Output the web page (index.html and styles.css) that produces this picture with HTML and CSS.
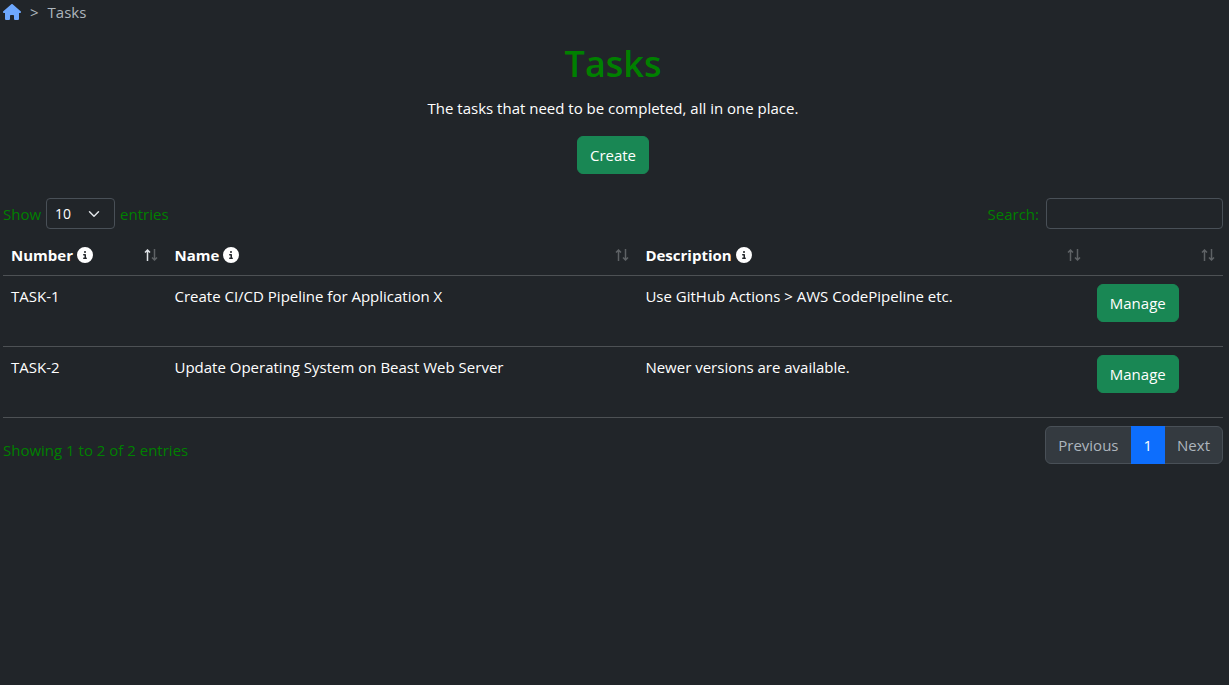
FILE: index.html
```html
<!DOCTYPE html>
<html lang="en">
<head>
    <meta charset="UTF-8">
    <meta name="viewport" content="width=device-width, initial-scale=1.0">
    <title>Tasks</title>
    <link rel="stylesheet" href="styles.css">
</head>
<body>
    <svg class="sprite" aria-hidden="true">
        <symbol id="info" viewBox="0 0 512 512">
            <path d="M256 512A256 256 0 1 0 256 0a256 256 0 1 0 0 512zM216 336h24V272H216c-13.3 0-24-10.7-24-24s10.7-24 24-24h48c13.3 0 24 10.7 24 24v88h8c13.3 0 24 10.7 24 24s-10.7 24-24 24H216c-13.3 0-24-10.7-24-24s10.7-24 24-24zm40-208a32 32 0 1 1 0 64 32 32 0 1 1 0-64z"/>
        </symbol>
    </svg>

    <nav class="breadcrumb" aria-label="breadcrumb">
        <a href="#" aria-label="Home">
            <svg class="home" viewBox="0 0 576 512"><path d="M575.8 255.5c0 18-15 32.1-32 32.1h-32l.7 160.2c0 2.7-.2 5.4-.5 8.1V472c0 22.1-17.9 40-40 40H456c-1.1 0-2.2 0-3.3-.1c-1.4.1-2.8.1-4.2.1H416 392c-22.1 0-40-17.9-40-40V448 384c0-17.7-14.3-32-32-32H256c-17.7 0-32 14.3-32 32v64 24c0 22.1-17.9 40-40 40H160 128.1c-1.5 0-3-.1-4.5-.2c-1.2.1-2.4.2-3.6.2H104c-22.1 0-40-17.9-40-40V360c0-.9 0-1.9.1-2.8V287.6H32c-18 0-32-14-32-32.1c0-9 3-17 10-24L266.4 8c7-7 15-8 22-8s15 2 21 7L564.8 231.5c8 7 12 15 11 24z"/></svg>
        </a>
        <span>&gt;</span>
        <span>Tasks</span>
    </nav>

    <header class="intro">
        <h1>Tasks</h1>
        <p>The tasks that need to be completed, all in one place.</p>
        <button type="button" class="btn">Create</button>
    </header>

    <main>
        <div class="controls">
            <label>Show
                <select>
                    <option>10</option>
                    <option>25</option>
                    <option>50</option>
                    <option>100</option>
                </select>
                entries
            </label>
            <label class="search">Search: <input type="search"></label>
        </div>

        <table>
            <colgroup>
                <col class="col-number">
                <col class="col-name">
                <col class="col-description">
                <col class="col-action">
            </colgroup>
            <thead>
                <tr>
                    <th>
                        <div class="heading">
                            Number <svg class="info"><use href="#info"/></svg>
                            <svg class="sort asc" viewBox="0 0 14 12"><path d="M3.500 12V1M1 3.500 3.500 1 6 3.500"/><path d="M10.500 0v11M8 8.500l2.500 2.500L13 8.500"/></svg>
                        </div>
                    </th>
                    <th>
                        <div class="heading">
                            Name <svg class="info"><use href="#info"/></svg>
                            <svg class="sort" viewBox="0 0 14 12"><path d="M3.500 12V1M1 3.500 3.500 1 6 3.500"/><path d="M10.500 0v11M8 8.500l2.500 2.500L13 8.500"/></svg>
                        </div>
                    </th>
                    <th>
                        <div class="heading">
                            Description <svg class="info"><use href="#info"/></svg>
                            <svg class="sort" viewBox="0 0 14 12"><path d="M3.500 12V1M1 3.500 3.500 1 6 3.500"/><path d="M10.500 0v11M8 8.500l2.500 2.500L13 8.500"/></svg>
                        </div>
                    </th>
                    <th>
                        <div class="heading">
                            <svg class="sort" viewBox="0 0 14 12"><path d="M3.500 12V1M1 3.500 3.500 1 6 3.500"/><path d="M10.500 0v11M8 8.500l2.500 2.500L13 8.500"/></svg>
                        </div>
                    </th>
                </tr>
            </thead>
            <tbody>
                <tr>
                    <td>TASK-1</td>
                    <td>Create CI/CD Pipeline for Application X</td>
                    <td>Use GitHub Actions &gt; AWS CodePipeline etc.</td>
                    <td><button type="button" class="btn manage">Manage</button></td>
                </tr>
                <tr>
                    <td>TASK-2</td>
                    <td>Update Operating System on Beast Web Server</td>
                    <td>Newer versions are available.</td>
                    <td><button type="button" class="btn manage">Manage</button></td>
                </tr>
            </tbody>
        </table>

        <div class="footer">
            <div class="entries">Showing 1 to 2 of 2 entries</div>
            <nav class="pagination" aria-label="Pages">
                <a href="#">Previous</a>
                <a href="#" class="active">1</a>
                <a href="#">Next</a>
            </nav>
        </div>
    </main>
</body>
</html>
```
FILE: styles.css
```css
* { box-sizing: border-box; }
body {
    margin: 0;
    padding: 0 6px 0 3px;
    background: #212529;
    color: #fff;
    font: 15px/24px "Segoe UI", "Open Sans", "Noto Sans", sans-serif;
}
button, input, select { font: inherit; }
.sprite { display: none; }

.breadcrumb { display: flex; align-items: center; gap: 9px; height: 24px; margin-bottom: 16px; color: #adb5bd; }
.breadcrumb a { display: flex; }
.home { width: 18px; height: 16px; fill: #6ea8fe; }

.intro { text-align: center; margin-bottom: 24px; }
h1 { margin: 0 0 8px; color: green; font-size: 36px; font-weight: 600; line-height: 48px; }
.intro p { margin: 0 0 16px; }
.btn { display: inline-block; vertical-align: top; padding: 6px 12px; border: 1px solid #198754; border-radius: 6px; background: #198754; color: #fff; cursor: pointer; }
.btn:hover { background: #157347; }
.manage { margin-bottom: 16px; }

.controls { display: flex; justify-content: space-between; margin-bottom: 6px; color: green; }
.controls label { display: flex; align-items: center; gap: 5px; }
.controls .search { gap: 7px; }
select, input { height: 31px; border: 1px solid #495057; border-radius: 4px; background: #212529; color: #fff; font-size: 14px; }
select {
    width: 69px;
    padding: 0 8px;
    appearance: none;
    background: #212529 url("data:image/svg+xml,%3Csvg xmlns='http://www.w3.org/2000/svg' viewBox='0 0 16 16'%3E%3Cpath fill='none' stroke='%23dee2e6' stroke-linecap='round' stroke-linejoin='round' stroke-width='2' d='m2 5 6 6 6-6'/%3E%3C/svg%3E") no-repeat right 14px center / 12px;
}
input { width: 177px; padding: 4px 8px; }

table { width: 100%; table-layout: fixed; border-collapse: separate; border-spacing: 0; margin-bottom: 8px; }
.col-number { width: 13.4%; }
.col-name { width: 38.6%; }
.col-description { width: 37%; }
.col-action { width: 11%; }
th, td { padding: 8px; border-bottom: 1px solid #4d5154; text-align: left; vertical-align: top; }
th { font-weight: 700; }
.heading { display: flex; align-items: center; gap: 4px; height: 24px; }
.info { width: 16px; height: 16px; fill: #fff; }
.sort { width: 14px; height: 12px; margin-left: auto; fill: none; stroke: #5e6265; stroke-width: 1.5; }
.asc path:first-child { stroke: #dee2e6; }

.footer { display: flex; justify-content: space-between; align-items: flex-start; color: green; }
.entries { padding-top: 12px; }
.pagination { display: flex; border: 1px solid #495057; border-radius: 6px; background: #343a40; }
.pagination a { padding: 6px 12px; color: #adb5bd; text-decoration: none; }
.pagination .active { margin: -1px 0; padding: 7px 13px; background: #0d6efd; color: #fff; }
```
